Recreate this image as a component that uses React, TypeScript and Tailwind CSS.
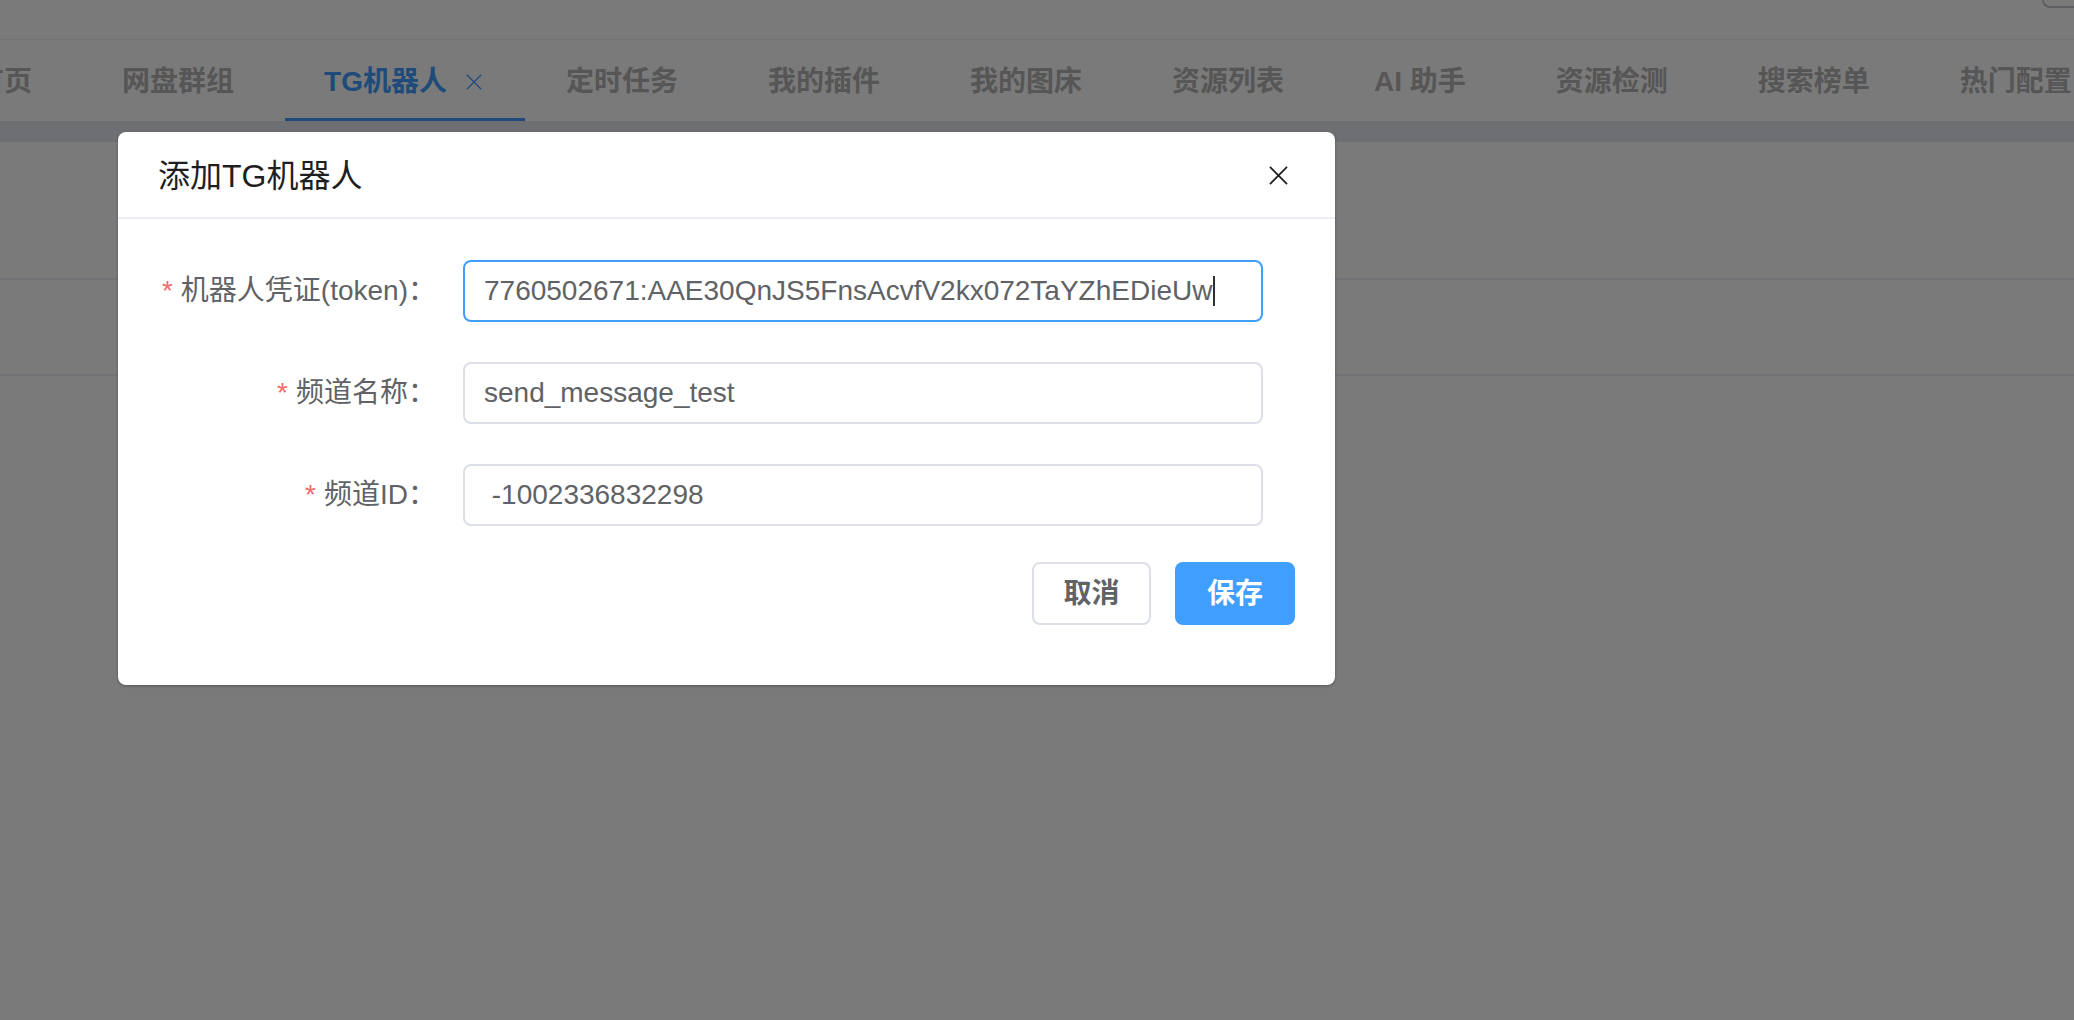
import React from "react";

const tabs = [
  "首页",
  "网盘群组",
  "TG机器人",
  "定时任务",
  "我的插件",
  "我的图床",
  "资源列表",
  "AI 助手",
  "资源检测",
  "搜索榜单",
  "热门配置",
];

const fields = [
  { label: "机器人凭证(token)：", value: "7760502671:AAE30QnJS5FnsAcvfV2kx072TaYZhEDieUw", focused: true },
  { label: "频道名称：", value: "send_message_test" },
  { label: "频道ID：", value: " -1002336832298" },
];

function XIcon({ size, width }: { size: number; width: number }) {
  return (
    <svg width={size} height={size} viewBox="0 0 20 20" fill="none" stroke="currentColor" strokeWidth={width}>
      <path d="M1 1L19 19M19 1L1 19" />
    </svg>
  );
}

function TabBar() {
  return (
    <div className="flex h-[81px] overflow-hidden border-b-0">
      <div className="-ml-[69px] flex flex-none">
        {tabs.map((t) =>
          t === "TG机器人" ? (
            <div key={t} className="relative flex flex-none items-center pl-[45px] pr-[38px] pt-[3px] text-[28px] font-semibold text-[#409eff]">
              <span>{t}</span>
              <span className="ml-[19px] flex w-[17px] items-center">
                <XIcon size={16} width={1.6} />
              </span>
              <span className="absolute bottom-0 left-[6px] -right-[4px] h-[3px] bg-[#409eff]" />
            </div>
          ) : (
            <div key={t} className="flex flex-none items-center px-[45px] pt-[3px] text-[28px] font-semibold text-[#b3b3b3]">
              {t}
            </div>
          )
        )}
      </div>
    </div>
  );
}

function Field({ label, value, focused }: { label: string; value: string; focused?: boolean }) {
  return (
    <div className="flex h-[62px] items-center">
      <div className="flex w-[305px] items-center justify-end pr-[27px] text-[28px] text-[#606266]">
        <span className="mr-[8px] text-[#f56c6c]">*</span>
        <span>{label}</span>
      </div>
      <div
        className={
          focused
            ? "flex h-[62px] w-[800px] items-center rounded-[8px] border-2 border-[#409eff] px-[19px] text-[28px] text-[#606266] whitespace-pre"
            : "flex h-[62px] w-[800px] items-center rounded-[8px] border-2 border-[#dcdfe6] px-[19px] text-[28px] text-[#606266] whitespace-pre"
        }
      >
        <span>{value}</span>
        {focused && <span className="ml-[1px] h-[30px] w-[2px] bg-[#303133]" />}
      </div>
    </div>
  );
}

export default function App() {
  return (
    <div className="relative h-[1020px] w-full overflow-hidden bg-white font-['Liberation_Sans','Noto_Sans_CJK_SC',sans-serif]">
      {/* 背景页面 */}
      <div className="flex h-[40px] justify-end border-b border-[#ebeef5]">
        <div className="-mr-[20px] -mt-[30px] h-[38px] w-[52px] rounded-[8px] border-2 border-[#c0c4cc]" />
      </div>
      <TabBar />
      <div className="h-[21px] bg-[#e6e8ee]" />
      <div className="h-[136px]" />
      <div className="h-[98px] border-y-2 border-[#ebeef5]" />

      {/* 遮罩 + 弹窗 */}
      <div className="absolute inset-0 bg-black/[0.52] pl-[118px] pt-[132px]">
        <div className="w-[1217px] rounded-[8px] bg-white shadow-[0_1px_3px_rgba(0,0,0,0.3)]">
          <div className="flex h-[87px] items-center justify-between border-b-2 border-[#ebeef5] pl-[40px] pr-[47px] pt-[2px]">
            <span className="text-[32px] text-[#1f1f1f]">添加TG机器人</span>
            <span className="text-[#1f1f1f]">
              <XIcon size={19} width={1.8} />
            </span>
          </div>
          <div className="flex flex-col gap-[40px] pl-[40px] pt-[41px]">
            {fields.map((f) => (
              <Field key={f.label} {...f} />
            ))}
          </div>
          <div className="flex justify-end gap-[24px] pb-[60px] pr-[40px] pt-[36px]">
            <button className="h-[63px] w-[119px] rounded-[8px] border-2 border-[#dcdfe6] bg-white text-[28px] font-semibold text-[#606266]">
              取消
            </button>
            <button className="h-[63px] w-[120px] rounded-[8px] bg-[#409eff] text-[28px] font-semibold text-white">
              保存
            </button>
          </div>
        </div>
      </div>
    </div>
  );
}
